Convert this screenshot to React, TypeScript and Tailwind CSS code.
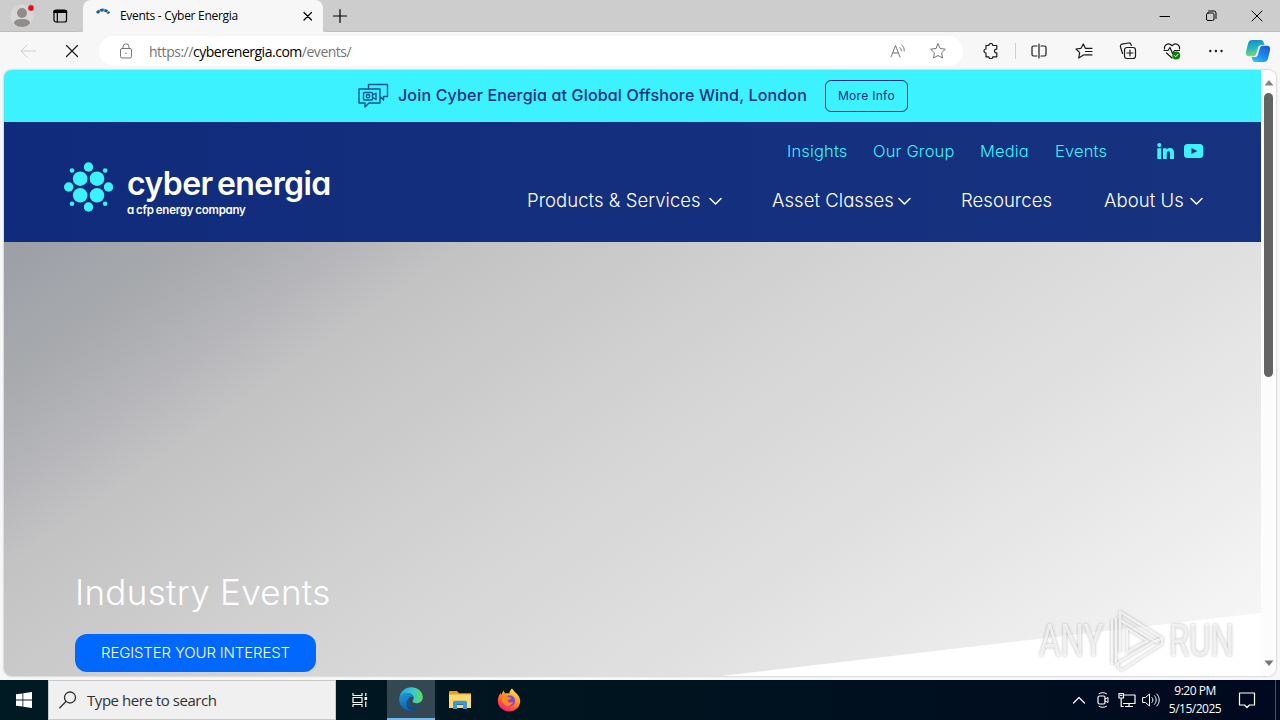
import type { ReactNode } from 'react';
import { clsx } from 'clsx';

const POPPINS = "font-[Inter,sans-serif] [font-feature-settings:'cv11']";
const SEGOE = "font-['Open_Sans','Noto_Sans',sans-serif]";

interface GlyphProps {
  className?: string;
  viewBox?: string;
  children: ReactNode;
}

/** Thin outlined icon used by the browser chrome and the tray */
const Glyph = ({ className, viewBox = '0 0 16 16', children }: GlyphProps) => (
  <svg
    viewBox={viewBox}
    className={clsx('block shrink-0', className)}
    fill="none"
    stroke="currentColor"
    strokeLinecap="round"
    strokeLinejoin="round"
  >
    {children}
  </svg>
);

const TitleBar = () => (
  <div className="flex h-8 bg-[#cdcdcd] text-black">
    <div className="flex w-[83px] items-center rounded-br-md border-b border-[#bdbdbd] pl-[10px]">
      <svg viewBox="0 0 26 26" className="h-[26px] w-[26px] shrink-0">
        <circle cx="12" cy="13" r="11.5" fill="#d9d7d5" />
        <circle cx="12" cy="10" r="5" fill="#8f8c8a" />
        <path d="M4 20.500c0-3.500 3.500-4.500 8-4.500s8 1 8 4.500c-2 2.400-5 3.500-8 3.500s-6-1.100-8-3.500z" fill="#8f8c8a" />
        <circle cx="21" cy="5" r="3.200" fill="#e00b1c" stroke="#d9d7d5" strokeWidth=".6" />
      </svg>
      <Glyph className="ml-[16px] h-4 w-4">
        <rect x="2" y="2" width="12.500" height="12" rx="2" strokeWidth="1.200" />
        <path d="M2 4.200h12.500M2.500 3h11.500" strokeWidth="1.800" />
        <path d="M5.300 5v9" strokeWidth="1.200" />
      </Glyph>
    </div>
    <div className="flex w-[240px] items-center rounded-t-lg bg-[#f7f7f7] pl-[13px]">
      <Glyph className="h-4 w-4 text-[#245c92]">
        <path d="M1 5C4.500 .8 10 1 13 5.500" strokeWidth="2.800" strokeDasharray="3.500 .6" strokeLinecap="butt" />
      </Glyph>
      <span className={clsx(SEGOE, 'ml-2 w-[179px] text-[12px] tracking-[-0.3px] whitespace-nowrap')}>
        Events - Cyber Energia
      </span>
      <Glyph className="ml-[3px] h-3 w-3" viewBox="0 0 12 12">
        <path d="M2 2.500l7.500 7.500M9.500 2.500L2 10" strokeWidth="1.200" />
      </Glyph>
    </div>
    <div className="flex flex-1 items-center rounded-bl-md border-b border-[#bdbdbd] pl-[9px]">
      <Glyph className="h-4 w-4">
        <path d="M8 1.500v13M1.500 8h13" strokeWidth="1.200" />
      </Glyph>
      <div className="ml-auto flex items-center gap-[30px] pr-[15px]">
        <Glyph className="h-4 w-4">
          <path d="M3 8.500h9.500" strokeWidth="1" />
        </Glyph>
        <Glyph className="h-4 w-4">
          <rect x="3.500" y="5" width="7.500" height="7.500" rx="1.500" />
          <path d="M5.500 3h5.500a2 2 0 0 1 2 2v5.500" />
        </Glyph>
        <Glyph className="h-4 w-4">
          <path d="M3 3l10 10M13 3L3 13" />
        </Glyph>
      </div>
    </div>
  </div>
);

const CopilotLogo = () => (
  <svg viewBox="0 0 26 24" className="h-6 w-[26px] shrink-0">
    <defs>
      <linearGradient id="copilot-a" x1="0" y1="0" x2=".2" y2="1">
        <stop offset="0" stopColor="#1686c8" />
        <stop offset=".55" stopColor="#25b7c4" />
        <stop offset="1" stopColor="#7fd66a" />
      </linearGradient>
      <linearGradient id="copilot-b" x1="1" y1="0" x2=".2" y2="1">
        <stop offset="0" stopColor="#1d57c4" />
        <stop offset=".6" stopColor="#1c8df0" />
        <stop offset="1" stopColor="#2fc2f5" />
      </linearGradient>
    </defs>
    <path d="M7 1h9c1.600 0 2.200 1 2.700 2.500L19.500 6h-3c-2 0-2.800.8-3.400 2.800l-1.900 6.200c-.6 1.700-1.400 2.300-3 2.300H4c-2.600 0-3.600-2-3-4.600l2-8C3.700 2.200 5 1 7 1z" fill="url(#copilot-a)" />
    <path d="M19 23h-9c-1.600 0-2.200-1-2.700-2.500L6.600 18h3c2 0 2.800-.8 3.400-2.800L14.900 9c.6-1.700 1.400-2.300 3-2.300H22c2.600 0 3.600 2 3 4.600l-2 8c-.7 2.500-2 3.700-4 3.700z" fill="url(#copilot-b)" />
  </svg>
);

const Toolbar = () => (
  <div className="flex h-[38px] items-center bg-[#f7f7f7] text-[#1b1b1b]">
    <Glyph className="ml-5 h-4 w-4 text-[#cfcfcf]">
      <path d="M15.500 8H1M7 2L1 8l6 6" />
    </Glyph>
    <Glyph className="ml-7 h-4 w-4">
      <path d="M2.500 2.500l11 11M13.500 2.500l-11 11" strokeWidth="1.200" />
    </Glyph>
    <div className="ml-[19px] flex h-[30px] w-[864px] items-center rounded-full bg-white text-[#757575]">
      <Glyph className="ml-[19px] h-4 w-4">
        <rect x="2.500" y="5.500" width="11" height="9.500" rx="1.500" />
        <path d="M5 5.500V3.800a3 3 0 0 1 6 0v1.700" />
        <circle cx="8" cy="10.300" r=".8" fill="currentColor" stroke="none" />
      </Glyph>
      <span className={clsx(SEGOE, 'ml-[15px] w-[741px] text-[14px] tracking-[-0.48px] whitespace-nowrap')}>
        https://<span className="text-black">cyberenergia.com</span>/events/
      </span>
      <Glyph className="h-4 w-4">
        <path d="M1 14L5.500 2.500 10 14M2.700 10h5.700M10 4.500c1 .8 1.400 2 1.300 3.300M11.700 2c2 1.400 2.700 3.600 2.500 6" />
      </Glyph>
      <Glyph className="ml-6 h-4 w-4">
        <path d="M8 .8l2.200 4.700 5.100.7-3.700 3.600.9 5.200L8 12.500 3.500 15l.9-5.200L.7 6.200l5.100-.7z" />
      </Glyph>
    </div>
    <Glyph className="ml-5 h-4 w-4">
      <path
        d="M3 2.500h2.800a2 2 0 0 1 4 0h4v3.700a1.900 1.900 0 1 0 0 3.700v3.900h-4a2 2 0 0 1-4 0H3V10a2 2 0 1 1 0-4z"
        strokeWidth="1.200"
      />
    </Glyph>
    <div className="ml-4 h-4 w-px bg-[#cfcfcf]" />
    <Glyph className="ml-[15px] h-4 w-4">
      <path d="M6 3H2.500A1.500 1.500 0 0 0 1 4.500v7A1.500 1.500 0 0 0 2.500 13H6M10 3h3.500A1.500 1.500 0 0 1 15 4.500v7a1.500 1.500 0 0 1-1.500 1.500H10M8 1v14" strokeWidth="1.200" />
    </Glyph>
    <Glyph className="ml-7 h-4 w-[18px]" viewBox="0 0 18 16">
      <path d="M8.500 12l-4.800 3 1-5.400L1 6l5-.7L8.300 1l2 4.300H17M10.500 8.500H17M9.500 11.800H17" strokeWidth="1.200" />
    </Glyph>
    <Glyph className="ml-[26px] h-[18px] w-[18px]" viewBox="0 0 18 18">
      <rect x="5.500" y="5.500" width="11" height="11" rx="2.500" strokeWidth="1.200" />
      <path d="M11 8v6M8 11h6M3.500 11.500L1.500 5A2.200 2.200 0 0 1 3 2.200L9.500 1A2.200 2.200 0 0 1 12 2.500l.3 1" strokeWidth="1.200" />
    </Glyph>
    <Glyph className="ml-[26px] h-[18px] w-[18px]" viewBox="0 0 18 18">
      <path d="M1.500 7C.8 3.500 5-.2 9 3.700 13-.2 17.200 3.500 16.500 7M1 8.500h4l2-3 2.500 6 2-3h5M3.500 11L9 16" strokeWidth="1.200" />
      <circle cx="13.200" cy="13.500" r="4" fill="#107c10" stroke="none" />
      <path d="M11.500 13.600l1.200 1.200 2.300-2.500" stroke="#fff" />
    </Glyph>
    <Glyph className="ml-[27px] h-4 w-4">
      <g fill="currentColor" stroke="none">
        <circle cx="2.300" cy="8" r="1.200" />
        <circle cx="7.900" cy="8" r="1.200" />
        <circle cx="13.500" cy="8" r="1.200" />
      </g>
    </Glyph>
    <div className="ml-[21px]">
      <CopilotLogo />
    </div>
  </div>
);

const Announcement = () => (
  <div className={clsx(POPPINS, 'flex h-[52px] items-center bg-[#3cf2ff] pl-[353px] text-[#132f7d]')}>
    <Glyph className="h-[26px] w-8 text-[#13568f]" viewBox="0 0 32 26">
      <path d="M11.500 5V1.500H30.500v12h-4V17l-3.500-3.500M2 6h21v14h-11l-4 4v-4H2z" strokeWidth="1.400" />
      <rect x="6.500" y="9.500" width="9" height="7.500" rx="1" strokeWidth="1.400" />
      <circle cx="11" cy="13.200" r="1.700" strokeWidth="1.400" />
      <path d="M15.500 12l3.500-2v6.500l-3.500-2" strokeWidth="1.400" />
    </Glyph>
    <span className="mb-[2px] ml-[9px] w-[427px] text-[16px] font-medium tracking-[0.17px] whitespace-nowrap">
      Join Cyber Energia at Global Offshore Wind, London
    </span>
    <button className="flex h-8 w-[83px] items-center justify-center rounded-[6px] border border-[#132f7d] text-[12px] tracking-[0.3px]">
      More Info
    </button>
  </div>
);

const DOTS = [
  [24.500, 5, 4.700],
  [24.500, 45, 4.700],
  [4.700, 25, 4.700],
  [44.500, 25, 4.700],
  [16.200, 16.700, 7.300],
  [33, 16.700, 7.300],
  [16.200, 33.300, 7.300],
  [33, 33.300, 7.300],
  [8, 8.500, 2.300],
  [41.200, 8.500, 2.300],
  [8, 41.700, 2.300],
  [41.200, 41.700, 2.300],
];

const Logo = () => (
  <div className={clsx(POPPINS, 'flex items-start text-white')}>
    <svg viewBox="0 0 49 50" className="h-[50px] w-[49px] shrink-0 fill-[#3cf2ff]">
      {DOTS.map(([cx, cy, r]) => (
        <circle key={`${cx}-${cy}`} cx={cx} cy={cy} r={r} />
      ))}
    </svg>
    <div className="ml-[14px] whitespace-nowrap">
      <div className="h-[42px] text-[32px] leading-[43px] font-semibold tracking-[-0.6px] [word-spacing:-3px]">
        cyber energia
      </div>
      <div className="text-[11.500px] leading-3 font-semibold tracking-[-0.25px] [word-spacing:-0.5px]">
        a cfp energy company
      </div>
    </div>
  </div>
);

const Chevron = () => (
  <Glyph className="ml-[5px] h-3 w-[13px]" viewBox="0 0 13 12">
    <path d="M1 3.500l5.500 5.500L12 3.500" strokeWidth="1.500" />
  </Glyph>
);

const MAIN_NAV = [
  { label: 'Products & Services', width: 'w-[177px]', menu: true },
  { label: 'Asset Classes', width: 'w-[121px]', menu: true },
  { label: 'Resources', width: 'w-[93px]', menu: false },
  { label: 'About Us', width: 'w-[81px]', menu: true },
];

const TOP_NAV = [
  { label: 'Insights', width: 'w-[61px]' },
  { label: 'Our Group', width: 'w-[82px]' },
  { label: 'Media', width: 'w-[50px]' },
  { label: 'Events', width: 'w-[52px]' },
];

const SiteHeader = () => (
  <header className="flex h-[120px] justify-between bg-linear-to-r from-[#102b7b] to-[#173380] pr-[57px] pl-[60px]">
    <div className="pt-10">
      <Logo />
    </div>
    <div className={clsx(POPPINS, 'flex flex-col items-end pt-[17px] font-light whitespace-nowrap')}>
      <nav className="flex h-6 items-center gap-[25px] text-[16.5px] tracking-[0.15px] text-[#3cf2ff]">
        {TOP_NAV.map(({ label, width }) => (
          <a key={label} className={width}>
            {label}
          </a>
        ))}
        <div className="ml-[25px] flex items-center gap-[10px]">
          <svg viewBox="0 0 17 16" className="h-4 w-[17px] fill-current">
            <circle cx="2.300" cy="2.100" r="2.100" />
            <path d="M.3 5.300h4V16H.3zM6 5.300h3.700v1.400C10.400 5.600 11.400 5 12.800 5 16 5 17 7 17 10v6h-4v-5.400c0-1.300-.2-2.300-1.500-2.300S9.800 9.400 9.800 10.600V16H6z" />
          </svg>
          <svg viewBox="0 0 20 14" className="h-[14px] w-5">
            <rect width="19.200" height="14" rx="3.500" fill="currentColor" />
            <path d="M7.500 4l5.800 3-5.800 3z" fill="#15317e" />
          </svg>
        </div>
      </nav>
      <nav className="mt-[23px] mr-px flex h-[30px] items-center gap-[50px] text-[18.5px] tracking-[0.05px] text-white">
        {MAIN_NAV.map(({ label, width, menu }) => (
          <a key={label} className="flex items-center">
            <span className={width}>{label}</span>
            {menu && <Chevron />}
          </a>
        ))}
      </nav>
    </div>
  </header>
);

const Hero = () => (
  <section
    className={clsx(
      POPPINS,
      'relative h-[434px] bg-[linear-gradient(145deg,#9b9fa6_0%,#a9abae_12%,#b7b7bb_19%,#c3c3c4_25%,#d4d4d4_47%,#e0e0e0_67%,#ececec_83%,#fafafa_100%)] px-[71px] pt-[325px] text-white'
    )}
  >
    <svg viewBox="0 0 540 64" className="absolute right-0 bottom-0 h-16 w-[540px] fill-white">
      <path d="M0 64L540 1v63z" />
    </svg>
    <h1 className="h-[50px] text-[35px] leading-[51px] font-light tracking-[0.3px] whitespace-nowrap">
      Industry Events
    </h1>
    <button className="mt-[17px] flex h-[38px] w-[241px] items-center justify-center rounded-xl bg-[#0068ff] text-[15px] font-light tracking-[-0.15px] whitespace-nowrap">
      REGISTER YOUR INTEREST
    </button>
  </section>
);

const Scrollbar = () => (
  <div className="flex w-[15px] flex-col items-center bg-[#fcfcfc]">
    <svg viewBox="0 0 10 6" className="mt-[10px] h-[6px] w-[10px] fill-[#858585]">
      <path d="M5 0l4.500 5.500H.5z" />
    </svg>
    <div className="mt-[7px] h-[284px] w-[9px] rounded-full bg-[#636363]" />
    <svg viewBox="0 0 10 6" className="mt-auto mb-[10px] h-[6px] w-[10px] fill-[#757575]">
      <path d="M5 6L.5.5h9z" />
    </svg>
  </div>
);

const Watermark = () => (
  <div className="absolute top-[608px] left-[1039px] flex h-[66px] w-[194px] items-center justify-between font-[Roboto,sans-serif] text-[45px] text-white/70 [filter:drop-shadow(0_0_1.5px_#999)]">
    <span className="w-[66px] origin-left scale-x-[0.73]">ANY</span>
    <svg viewBox="0 0 58 66" className="h-[66px] w-[58px] shrink-0" fill="none" stroke="currentColor" strokeLinejoin="round">
      <path d="M12 18V4l42 26-6 4-36-22v30M12 44V22" strokeWidth="2.500" />
      <path d="M19 20v24l20-11zM54 30v6L14 62l-4-3v-4l40-24" strokeWidth="2" />
      <path d="M4 12v44M8 10v48" strokeWidth="2" />
    </svg>
    <span className="w-[64px] origin-left scale-x-[0.73]">RUN</span>
  </div>
);

const EdgeLogo = () => (
  <svg viewBox="0 0 24 24" className="h-6 w-6">
    <defs>
      <linearGradient id="edge-top" x1="0" y1=".5" x2="1" y2=".5">
        <stop offset="0" stopColor="#219fdf" />
        <stop offset=".5" stopColor="#35c5d5" />
        <stop offset="1" stopColor="#5edc62" />
      </linearGradient>
      <linearGradient id="edge-mid" x1="0" y1="0" x2=".6" y2="1">
        <stop offset="0" stopColor="#1e9be0" />
        <stop offset="1" stopColor="#0c59a5" />
      </linearGradient>
    </defs>
    <path d="M.3 11C1.200 4.500 6 .2 12.200.2 19 .2 23.800 5 23.800 10.200c0 3.800-2.800 6-6 6-3 0-4.300-1.100-4.300-2 0-.8 1.200-1.200 1.200-3.200 0-2.800-2.800-4.800-6.200-4.800C4.700 6.200 1.500 8.200.3 11z" fill="url(#edge-top)" />
    <path d="M.2 12.500C.2 8.700 4.200 6 8.300 6c3.700 0 6.400 2.200 6.400 5-1.400-2-4-1.700-5 .2-2 4.200 1.600 9.800 7.300 9 2-.3 3.700-1.200 5-2.200C19.800 21.700 16.300 23.900 12 23.900 5.400 23.900.2 18.700.2 12.500z" fill="url(#edge-mid)" />
    <path d="M9.300 12c-1.500 4.500 2 9 7.700 8.200 2-.3 3.700-1.200 5-2.200-2 3.300-5.200 5.600-9 5.900C7.500 22.500 6 15.500 9.300 12z" fill="#124887" opacity=".8" />
  </svg>
);

const FolderLogo = () => (
  <svg viewBox="0 0 22 20" className="h-5 w-[22px]">
    <path d="M0 2.500C0 1.500.5 1 1.300 1H8l2 2.300h12v14.200H0z" fill="#e9a21c" />
    <path d="M0 4.500h22V18H0z" fill="#ffd96b" />
    <path d="M4 19v-6.500c0-1 .7-1.700 1.700-1.700h10.600c1 0 1.700.7 1.700 1.700V19h-4v-4H8v4z" fill="#3f97d4" />
    <path d="M8 14.500h6" stroke="#1c6eac" />
  </svg>
);

const FirefoxLogo = () => (
  <svg viewBox="0 0 24 24" className="h-6 w-6">
    <defs>
      <linearGradient id="fox" x1=".8" y1="0" x2=".2" y2="1">
        <stop offset="0" stopColor="#fff34f" />
        <stop offset=".4" stopColor="#ff9a1f" />
        <stop offset=".75" stopColor="#ff4646" />
        <stop offset="1" stopColor="#e4178d" />
      </linearGradient>
    </defs>
    <path d="M15 .5c1.500 2 2.500 3 4 4.500 2.500 2.300 4.200 5 4.200 8.200C23.200 19 18.200 23.500 12 23.500S.8 18.700.8 12.800C.8 9.700 2 6.800 3.700 5l.4 2L6.500 2.500 8 5.500c1.500-.4 3-.3 4.300.1C12.600 3.500 13.500 1.700 15 .5z" fill="url(#fox)" />
    <circle cx="12.500" cy="12.800" r="5.600" fill="#8143e0" />
    <path d="M5 9c3-1.500 5.200-1 6.500.3l3 .5c-.5 2-3.500 1.700-3.800 3 .8 2.300 4 2.200 5.500.7-1 3.500-4 4.900-6.700 4.200C6 16.800 4.500 13 5 9z" fill="#ff8a20" />
  </svg>
);

const Taskbar = () => (
  <div className={clsx(SEGOE, 'flex h-10 bg-linear-to-r from-[#001a23] via-[#00141f] to-[#00091f] text-white')}>
    <div className="flex w-12 items-center justify-center">
      <svg viewBox="0 0 16 16" className="h-4 w-4 fill-white">
        <path d="M0 2.300L6.500 1.400v6.200H0zM7.300 1.300L16 0v7.600H7.300zM0 8.400h6.500v6.200L0 13.700zM7.300 8.400H16V16l-8.700-1.300z" />
      </svg>
    </div>
    <div className="flex w-72 items-center border border-[#c9c9c9] bg-[#f0f0f0] pl-[10px] text-[#303030]">
      <Glyph className="h-[18px] w-[18px]" viewBox="0 0 18 18">
        <circle cx="11" cy="6.500" r="5.500" strokeWidth="1.300" />
        <path d="M7 10.500L.8 16.800" strokeWidth="1.300" />
      </Glyph>
      <span className="ml-[10px] text-[15px] tracking-[-0.45px] whitespace-nowrap">Type here to search</span>
    </div>
    <div className="flex w-[51px] items-center justify-center pr-[3px]">
      <Glyph className="h-4 w-4">
        <path d="M1 1v2.500h9V1M1 15v-2.500h9V15M1 5.500h9v5H1zM13.800 1v3M13.800 9.500V15" strokeWidth="1.200" strokeLinecap="butt" />
        <path d="M12.500 5h2.600v3h-2.600z" fill="currentColor" stroke="none" />
      </Glyph>
    </div>
    <div className="flex w-12 items-center justify-center border-b-2 border-[#76b9ed] bg-[#334850]">
      <EdgeLogo />
    </div>
    <div className="flex w-[49px] items-center justify-center">
      <FolderLogo />
    </div>
    <div className="flex w-[49px] items-center justify-center">
      <FirefoxLogo />
    </div>
    <div className="ml-auto flex items-center">
      <Glyph className="h-3 w-3" viewBox="0 0 12 12">
        <path d="M.5 9L6 3.500 11.500 9" strokeWidth="1.200" />
      </Glyph>
      <Glyph className="ml-[10px] h-4 w-4">
        <rect x="3" y="4" width="7" height="8" rx="1.500" strokeWidth="1.200" />
        <path d="M10 7l3-1.500v5L10 9M4 1.700C6 .3 9.500.3 11.500 1.700M4 14.300c2 1.400 5.500 1.400 7.500 0" />
      </Glyph>
      <Glyph className="ml-[7px] h-4 w-[18px]" viewBox="0 0 18 16">
        <path d="M5.500 3h11.500v8.500H5.500M11 11.500v3M7.500 14.500h7M1 1.500h4.500V6H1zM3.200 6v8.500h2M2.500 3.300h1.500" strokeWidth="1.200" />
      </Glyph>
      <Glyph className="ml-[6px] h-4 w-[18px]" viewBox="0 0 18 16">
        <path d="M1 5.500h2.500L7.500 2v12l-4-3.500H1zM10 5.500c1.300 1.300 1.300 3.700 0 5M12.500 3.700c2.300 2.300 2.300 6.300 0 8.600M14.800 2c3.300 3.200 3.300 8.800 0 12" />
      </Glyph>
      <div className="ml-2 flex w-[54px] flex-col items-center text-[12px] leading-[18px] tracking-[-0.5px] whitespace-nowrap">
        <span>9:20 PM</span>
        <span>5/15/2025</span>
      </div>
      <Glyph className="ml-[16px] h-[18px] w-[18px]" viewBox="0 0 18 18">
        <path d="M1.500 2h15v12h-5L9 16.500 6.500 14h-5z" strokeWidth="1.200" />
      </Glyph>
      <div className="ml-[19px] h-10 w-px bg-[#46505c]" />
      <div className="w-1" />
    </div>
  </div>
);

export default function App() {
  return (
    <div className="relative flex h-[720px] w-[1280px] flex-col overflow-hidden bg-[#f7f7f7]">
      <TitleBar />
      <Toolbar />
      <div className="mb-1 ml-1 flex h-[606px] w-[1272px] overflow-hidden rounded-lg shadow-[0_0_2px_#999]">
        <main className="w-[1257px]">
          <Announcement />
          <SiteHeader />
          <Hero />
        </main>
        <Scrollbar />
      </div>
      <Taskbar />
      <Watermark />
    </div>
  );
}
